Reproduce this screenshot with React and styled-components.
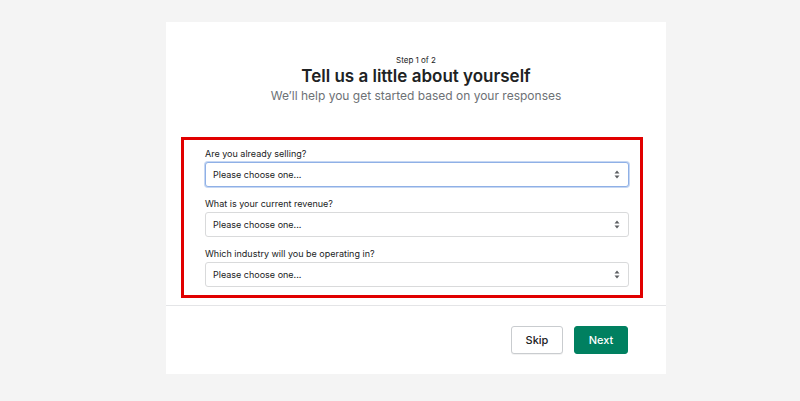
import React from 'react';
import styled, { createGlobalStyle } from 'styled-components';

const GlobalStyle = createGlobalStyle`
  html, body {
    margin: 0;
    padding: 0;
    background: #f4f4f4;
    font-family: Inter, "Noto Sans", "Liberation Sans", sans-serif;
    color: #202223;
  }
`;

const Page = styled.div`
  width: 800px;
  height: 401px;
  overflow: hidden;
`;

const Card = styled.div`
  width: 500px;
  height: 352px;
  margin: 22px 0 0 166px;
  background: #ffffff;
  display: flex;
  flex-direction: column;
`;

const Header = styled.header`
  padding-top: 33px;
  display: flex;
  flex-direction: column;
  align-items: center;
  text-align: center;
  .step {
    font-size: 8px;
    line-height: 10px;
    color: #202223;
  }
  .title {
    margin: 0;
    font-size: 17px;
    line-height: 22px;
    font-weight: 600;
    color: #202223;
  }
  .subtitle {
    font-size: 12px;
    line-height: 18px;
    color: #6d7175;
  }
`;

const FormSection = styled.section`
  margin: 32px 23px 0 15px;
  border: 3px solid #e10000;
  padding: 7px 11px 8px 21px;
  display: flex;
  flex-direction: column;
  gap: 10px;
`;

const Field = styled.label`
  display: flex;
  flex-direction: column;
  gap: 1px;
  .label {
    font-size: 9px;
    line-height: 14px;
    color: #202223;
  }
`;

const SelectWrap = styled.div`
  position: relative;
  height: 25px;
  svg {
    position: absolute;
    right: 9px;
    top: 8px;
    pointer-events: none;
  }
`;

const Select = styled.select`
  appearance: none;
  -webkit-appearance: none;
  width: 100%;
  height: 25px;
  box-sizing: border-box;
  padding: 0 24px 0 7px;
  font-family: inherit;
  font-size: 9px;
  color: #202223;
  background: #ffffff;
  border: 1px solid ${(p) => (p.$focused ? '#8fb0e6' : '#d9dadb')};
  box-shadow: ${(p) => (p.$focused ? '0 0 0 1px #c6d7f3' : 'none')};
  border-radius: 3px;
  outline: none;
`;

const Divider = styled.hr`
  margin: 7px 0 0;
  border: none;
  border-top: 1px solid #e4e5e7;
`;

const Footer = styled.footer`
  display: flex;
  justify-content: flex-end;
  gap: 11px;
  padding: 20px 38px 0 0;
`;

const Button = styled.button`
  height: 28px;
  padding: 0;
  width: ${(p) => (p.$primary ? '54px' : '52px')};
  border-radius: 3px;
  font-family: inherit;
  font-size: 11px;
  font-weight: 500;
  cursor: pointer;
  color: ${(p) => (p.$primary ? '#ffffff' : '#202223')};
  background: ${(p) => (p.$primary ? '#008060' : '#ffffff')};
  border: 1px solid ${(p) => (p.$primary ? '#008060' : '#c9cccf')};
  box-shadow: ${(p) => (p.$primary ? 'none' : '0 1px 0 rgba(0,0,0,0.05)')};
`;

function Chevrons() {
  return (
    <svg width="6" height="9" viewBox="0 0 6 9" fill="#5c5f62">
      <path d="M3 0.5 L5.5 3.5 H0.5 Z" />
      <path d="M3 8.5 L0.5 5.5 H5.5 Z" />
    </svg>
  );
}

const questions = [
  'Are you already selling?',
  'What is your current revenue?',
  'Which industry will you be operating in?',
];

export default function App() {
  return (
    <Page>
      <GlobalStyle />
      <Card>
        <Header>
          <span className="step">Step 1 of 2</span>
          <h1 className="title">Tell us a little about yourself</h1>
          <span className="subtitle">We’ll help you get started based on your responses</span>
        </Header>
        <FormSection>
          {questions.map((q, i) => (
            <Field key={i}>
              <span className="label">{q}</span>
              <SelectWrap>
                <Select $focused={i === 0} defaultValue="">
                  <option value="">Please choose one...</option>
                </Select>
                <Chevrons />
              </SelectWrap>
            </Field>
          ))}
        </FormSection>
        <Divider />
        <Footer>
          <Button>Skip</Button>
          <Button $primary>Next</Button>
        </Footer>
      </Card>
    </Page>
  );
}
